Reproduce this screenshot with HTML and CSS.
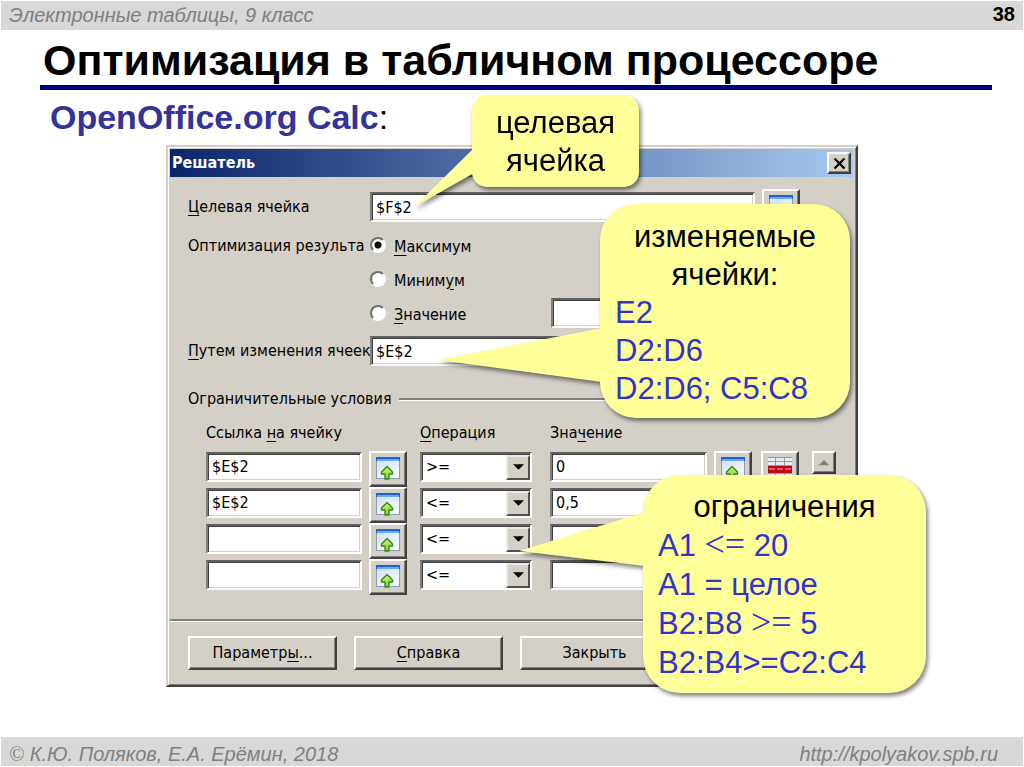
FILE: index.html
```
<!DOCTYPE html>
<html lang="ru">

<head>
    <meta charset="utf-8">
    <meta name="viewport" content="width=device-width,initial-scale=1">
    <title>Оптимизация в табличном процессоре</title>
    <link rel="stylesheet" href="styles.css">
</head>

<body>
    <!-- shared icons -->
    <svg class="defs" width="0" height="0" aria-hidden="true">
        <linearGradient id="pane" x1="0" y1="0" x2="1" y2="1">
            <stop offset="0" stop-color="#d3e1f5" />
            <stop offset="1" stop-color="#f8fbff" />
        </linearGradient>
        <linearGradient id="leaf" x1="0" y1="0" x2="0" y2="1">
            <stop offset="0" stop-color="#d0f27a" />
            <stop offset="1" stop-color="#7cd22c" />
        </linearGradient>
        <symbol id="shrink" viewBox="0 0 24 24">
            <rect x="0" y="0" width="24" height="22" fill="#8e9bb0" />
            <rect x="1" y="4" width="22" height="17" fill="url(#pane)" />
            <rect x="0" y="0" width="24" height="4" fill="#1f62cc" />
            <rect x="1" y="2" width="22" height="2" fill="#69aaf5" />
            <path d="M11 9.500L16.500 15v2H13v5h-4v-5H5.500v-2z" fill="url(#leaf)" stroke="#2f8a12" stroke-width="1.400" stroke-linejoin="round" />
        </symbol>
        <symbol id="remove" viewBox="0 0 24 24">
            <rect x="0" y="0" width="24" height="24" fill="#8f99a5" />
            <path d="M0 1h7v3H0zM8 1h8v3H8zM17 1h7v3h-7zM0 5h7v3H0zM8 5h8v3H8zM17 5h7v3h-7zM0 17h7v3H0zM8 17h8v3H8zM17 17h7v3h-7z" fill="#e8edf3" />
            <rect x="0" y="9" width="24" height="7" fill="#b80d18" />
            <path d="M1 11h6v2H1zM9 11h6v2H9zM17 11h6v2h-6z" fill="#f0525a" />
        </symbol>
        <symbol id="down" viewBox="0 0 12 6">
            <path d="M0 0h12L6 6z" />
        </symbol>
    </svg>

    <header class="bar">
        <span>Электронные таблицы, 9 класс</span>
        <b class="page-number">38</b>
    </header>

    <main>
        <h1>Оптимизация в табличном процессоре</h1>
        <h2><b>OpenOffice.org Calc</b>:</h2>

        <div class="stage">
            <form class="dialog" onsubmit="return false">
                <div class="titlebar">
                    <span>Решатель</span>
                    <button type="button" class="close" aria-label="Закрыть окно">
                        <svg width="13" height="11" viewBox="0 0 13 11"><path d="M1.500 0.500l10 10M11.500 0.500l-10 10" stroke="#000" stroke-width="2.200" /></svg>
                    </button>
                </div>

                <div class="params">
                    <label for="target"><u>Ц</u>елевая ячейка</label>
                    <input type="text" id="target" value="$F$2">
                    <button type="button" class="tool" aria-label="Свернуть"><svg><use href="#shrink" /></svg></button>

                    <span class="goal" id="goal">Оптимизация результа</span>
                    <div class="radios" role="radiogroup" aria-labelledby="goal">
                        <label><input type="radio" name="goal" checked><span><u>М</u>аксимум</span></label>
                        <label><input type="radio" name="goal"><span>Миним<u>у</u>м</span></label>
                        <div class="with-value">
                            <label><input type="radio" name="goal"><span><u>З</u>начение</span></label>
                            <input type="text" aria-label="Значение">
                        </div>
                    </div>

                    <label class="changing" for="changing"><u>П</u>утем изменения ячеек</label>
                    <input type="text" id="changing" value="$E$2">
                    <button type="button" class="tool" aria-label="Свернуть"><svg><use href="#shrink" /></svg></button>
                </div>

                <div class="section">Ограничительные условия</div>

                <div class="limits">
                    <label class="head ref" for="ref1">Ссылка <u>н</u>а ячейку</label>
                    <label class="head op" for="op1"><u>О</u>перация</label>
                    <label class="head val" for="val1">Зна<u>ч</u>ение</label>

                    <input class="ref" type="text" id="ref1" value="$E$2">
                    <button type="button" class="tool" aria-label="Свернуть"><svg><use href="#shrink" /></svg></button>
                    <div class="drop"><select id="op1"><option>&lt;=</option><option selected>&gt;=</option></select><i><svg><use href="#down" /></svg></i></div>
                    <input type="text" id="val1" value="0">
                    <button type="button" class="tool" aria-label="Свернуть"><svg><use href="#shrink" /></svg></button>
                    <button type="button" class="tool" aria-label="Удалить"><svg><use href="#remove" /></svg></button>
                    <button type="button" class="scroll-up" aria-label="Вверх"><svg width="12" height="6" viewBox="0 0 12 6"><path d="M0 6L6 0l6 6z" fill="#808080" /><path d="M1 6h11" stroke="#fff" /></svg></button>

                    <input class="ref" type="text" value="$E$2" aria-label="Ссылка 2">
                    <button type="button" class="tool" aria-label="Свернуть"><svg><use href="#shrink" /></svg></button>
                    <div class="drop"><select aria-label="Операция 2"><option>&lt;=</option><option>&gt;=</option></select><i><svg><use href="#down" /></svg></i></div>
                    <input type="text" value="0,5" aria-label="Значение 2">

                    <input class="ref" type="text" aria-label="Ссылка 3">
                    <button type="button" class="tool" aria-label="Свернуть"><svg><use href="#shrink" /></svg></button>
                    <div class="drop"><select aria-label="Операция 3"><option>&lt;=</option><option>&gt;=</option></select><i><svg><use href="#down" /></svg></i></div>
                    <input type="text" aria-label="Значение 3">

                    <input class="ref" type="text" aria-label="Ссылка 4">
                    <button type="button" class="tool" aria-label="Свернуть"><svg><use href="#shrink" /></svg></button>
                    <div class="drop"><select aria-label="Операция 4"><option>&lt;=</option><option>&gt;=</option></select><i><svg><use href="#down" /></svg></i></div>
                    <input type="text" aria-label="Значение 4">
                </div>

                <div class="actions">
                    <button type="button">Параметр<u>ы</u>...</button>
                    <button type="button"><u>С</u>правка</button>
                    <button type="button">Закрыть</button>
                </div>
            </form>

            <div class="callout callout-target">
                <svg class="tail" width="60" height="60" viewBox="0 0 60 60"><path d="M60 0L0 59 60 25z" /></svg>
                <p>целевая<br>ячейка</p>
            </div>

            <div class="callout callout-cells">
                <svg class="tail" width="164" height="54" viewBox="0 0 164 54"><path d="M164 0L0 32 164 54z" /></svg>
                <p>изменяемые<br>ячейки:</p>
                <ul>
                    <li>E2</li>
                    <li>D2:D6</li>
                    <li>D2:D6; C5:C8</li>
                </ul>
            </div>

            <div class="callout callout-limits">
                <svg class="tail" width="126" height="54" viewBox="0 0 126 54"><path d="M126 0L0 39 126 54z" /></svg>
                <p>ограничения</p>
                <ul>
                    <li>A1 <span class="serif">&lt;=</span> 20</li>
                    <li>A1 = целое</li>
                    <li>B2:B8 <span class="serif">&gt;=</span> 5</li>
                    <li>B2:B4&gt;=C2:C4</li>
                </ul>
            </div>
        </div>
    </main>

    <footer class="bar">
        <span><span class="serif">©</span> К.Ю. Поляков, Е.А. Ерёмин, 2018</span>
        <a href="http://kpolyakov.spb.ru">http://kpolyakov.spb.ru</a>
    </footer>
</body>

</html>
```
FILE: styles.css
```
* {
    box-sizing: border-box;
}

body {
    display: flex;
    flex-direction: column;
    min-height: 100vh;
    margin: 0;
    padding: 1px 0;
    background: #fff;
    color: #000;
    font-family: "Liberation Sans", Arial, sans-serif;
}

main {
    flex: 1;
}

.defs {
    position: absolute;
}

.serif {
    font-family: "Liberation Serif", "Times New Roman", serif;
}

/* slide header and footer */

.bar {
    display: flex;
    justify-content: space-between;
    height: 29px;
    margin: 0 1px;
    padding: 0 8px;
    background: #d8d8d8;
    color: #808080;
    font-size: 20px;
    font-style: italic;
    line-height: 28px;
}

footer.bar {
    padding: 0 25px 0 8px;
    line-height: 34px;
}

.bar a {
    color: inherit;
    text-decoration: none;
}

.page-number {
    color: #000;
    font-style: normal;
    line-height: 26px;
}

h1 {
    height: 60px;
    margin: 0 32px 0 40px;
    padding-left: 3px;
    border-bottom: 5px solid #000080;
    font-size: 43px;
    line-height: 60px;
    white-space: nowrap;
}

h2 {
    height: 55px;
    margin: 0;
    padding-left: 50px;
    font-size: 34px;
    font-weight: normal;
    line-height: 54px;
}

h2 b {
    color: #333399;
}

.stage {
    position: relative;
}

/* dialog window */

.dialog {
    margin: 0 166px;
    padding: 2px 3px 15px 2px;
    background: #d4d0c8;
    border: 2px solid;
    border-color: #d4d0c8 #404040 #404040 #d4d0c8;
    box-shadow: inset 1px 1px #fff, inset -1px -1px #808080;
    font-family: "DejaVu Sans Condensed", "DejaVu Sans", Tahoma, sans-serif;
    font-size: 16px;
    line-height: 24px;
}

.dialog input,
.dialog select,
.dialog button {
    margin: 0;
    color: #000;
    font: inherit;
}

.dialog u {
    text-underline-offset: 3px;
}

.titlebar {
    display: flex;
    align-items: center;
    justify-content: space-between;
    height: 28px;
    padding: 0 2px;
    background: linear-gradient(90deg, #0a246a, #a6caf0);
    color: #fff;
    font-weight: bold;
}

.dialog button {
    display: flex;
    align-items: center;
    justify-content: center;
    padding: 0;
    background: #d4d0c8;
    border: 2px solid;
    border-color: #fff #404040 #404040 #fff;
    box-shadow: inset -1px -1px #808080;
}

.dialog .close {
    width: 24px;
    height: 22px;
}

input[type=text] {
    width: 100%;
    min-width: 0;
    height: 30px;
    padding: 0 4px;
    background: #fff;
    border: 2px solid;
    border-color: #606060 #fff #fff #808080;
    border-radius: 0;
    box-shadow: inset 1px 1px #404040, inset -1px -1px #d4d0c8;
}

.params {
    display: grid;
    grid-template-columns: 182px 1fr 38px;
    align-items: center;
    margin: 12px 53px 0 18px;
    row-gap: 3px;
}

.params > input {
    width: calc(100% - 7px);
}

.tool {
    width: 38px;
    height: 36px;
}

.tool svg {
    width: 24px;
    height: 24px;
}

.goal,
.changing {
    white-space: nowrap;
}

.goal {
    align-self: start;
    margin-top: 6px;
}

.radios {
    grid-column: 2 / 4;
}

.radios label {
    display: flex;
    align-items: center;
    gap: 8px;
    width: 181px;
    height: 34px;
}

.radios label span {
    margin-top: 3px;
}

.radios input[type=text] {
    width: 156px;
}

.with-value {
    display: flex;
    align-items: center;
}

input[type=radio] {
    appearance: none;
    width: 16px;
    height: 16px;
    background: #fff;
    border: 2px solid;
    border-color: #707070 #fff #fff #707070;
    border-radius: 50%;
}

input[type=radio]:checked {
    background: radial-gradient(circle, #000 3px, #fff 4px);
}

.section {
    display: flex;
    align-items: center;
    gap: 7px;
    margin: 18px 17px 0 18px;
}

.section::after {
    content: "";
    flex: 1;
    height: 2px;
    background: #808080;
    border-bottom: 1px solid #fff;
}

.limits {
    display: grid;
    grid-template-columns: 163px 51px 130px 1fr 47px 51px 24px;
    grid-auto-rows: 36px;
    align-items: center;
    margin: 4px 17px 0 36px;
}

.head.op {
    grid-column: 3;
}

.head.val {
    grid-column: 4 / 8;
}

.limits input.ref {
    grid-column: 1;
}

.limits input {
    width: calc(100% - 7px);
}

.limits input,
.limits .drop {
    margin-bottom: 5px;
}

.drop {
    position: relative;
    width: 112px;
}

.drop select {
    appearance: none;
    display: block;
    width: 100%;
    height: 30px;
    padding: 0 4px;
    background: #fff;
    border: 2px solid;
    border-color: #606060 #fff #fff #808080;
    border-radius: 0;
    box-shadow: inset 1px 1px #404040;
}

/* arrow box over the select */
.drop i {
    position: absolute;
    top: 3px;
    right: 2px;
    display: flex;
    align-items: center;
    justify-content: center;
    width: 24px;
    height: 25px;
    background: #d4d0c8;
    border: 2px solid;
    border-color: #eceae6 #505050 #505050 #eceae6;
    pointer-events: none;
}

.drop svg {
    width: 11px;
    height: 6px;
}

.scroll-up {
    align-self: start;
    width: 24px;
    height: 23px;
}

.actions {
    display: flex;
    gap: 17px;
    margin-top: 24px;
    padding: 15px 18px 0;
    border-top: 2px solid #808080;
    box-shadow: inset 0 1px #fff;
}

.actions button {
    width: 149px;
    height: 34px;
}

/* yellow callouts */

.callout {
    position: absolute;
    background: #ffff99;
    filter: drop-shadow(2px 3px 2px rgba(0, 0, 0, 0.5));
    font-size: 31px;
    line-height: 38px;
}

.callout p,
.callout ul {
    margin: 0;
    padding: 0;
    list-style: none;
}

.callout p {
    text-align: center;
}

.callout ul {
    color: #3333cc;
}

.tail {
    position: absolute;
    right: calc(100% - 2px);
    fill: #ffff99;
}

.callout-target {
    top: -50px;
    left: 472px;
    width: 167px;
    padding: 9px 0 7px;
    border-radius: 15px;
}

.callout-target .tail {
    top: 53px;
}

.callout-cells {
    top: 59px;
    left: 600px;
    width: 250px;
    padding: 14px 15px 10px;
    border-radius: 36px;
}

.callout-cells .tail {
    top: 124px;
}

.callout-limits {
    top: 330px;
    left: 643px;
    width: 283px;
    padding: 12px 15px 11px;
    border-radius: 37px;
    line-height: 39px;
}

.callout-limits .serif {
    font-size: 36px;
    line-height: 30px;
}

.callout-limits .tail {
    top: 37px;
}
```
